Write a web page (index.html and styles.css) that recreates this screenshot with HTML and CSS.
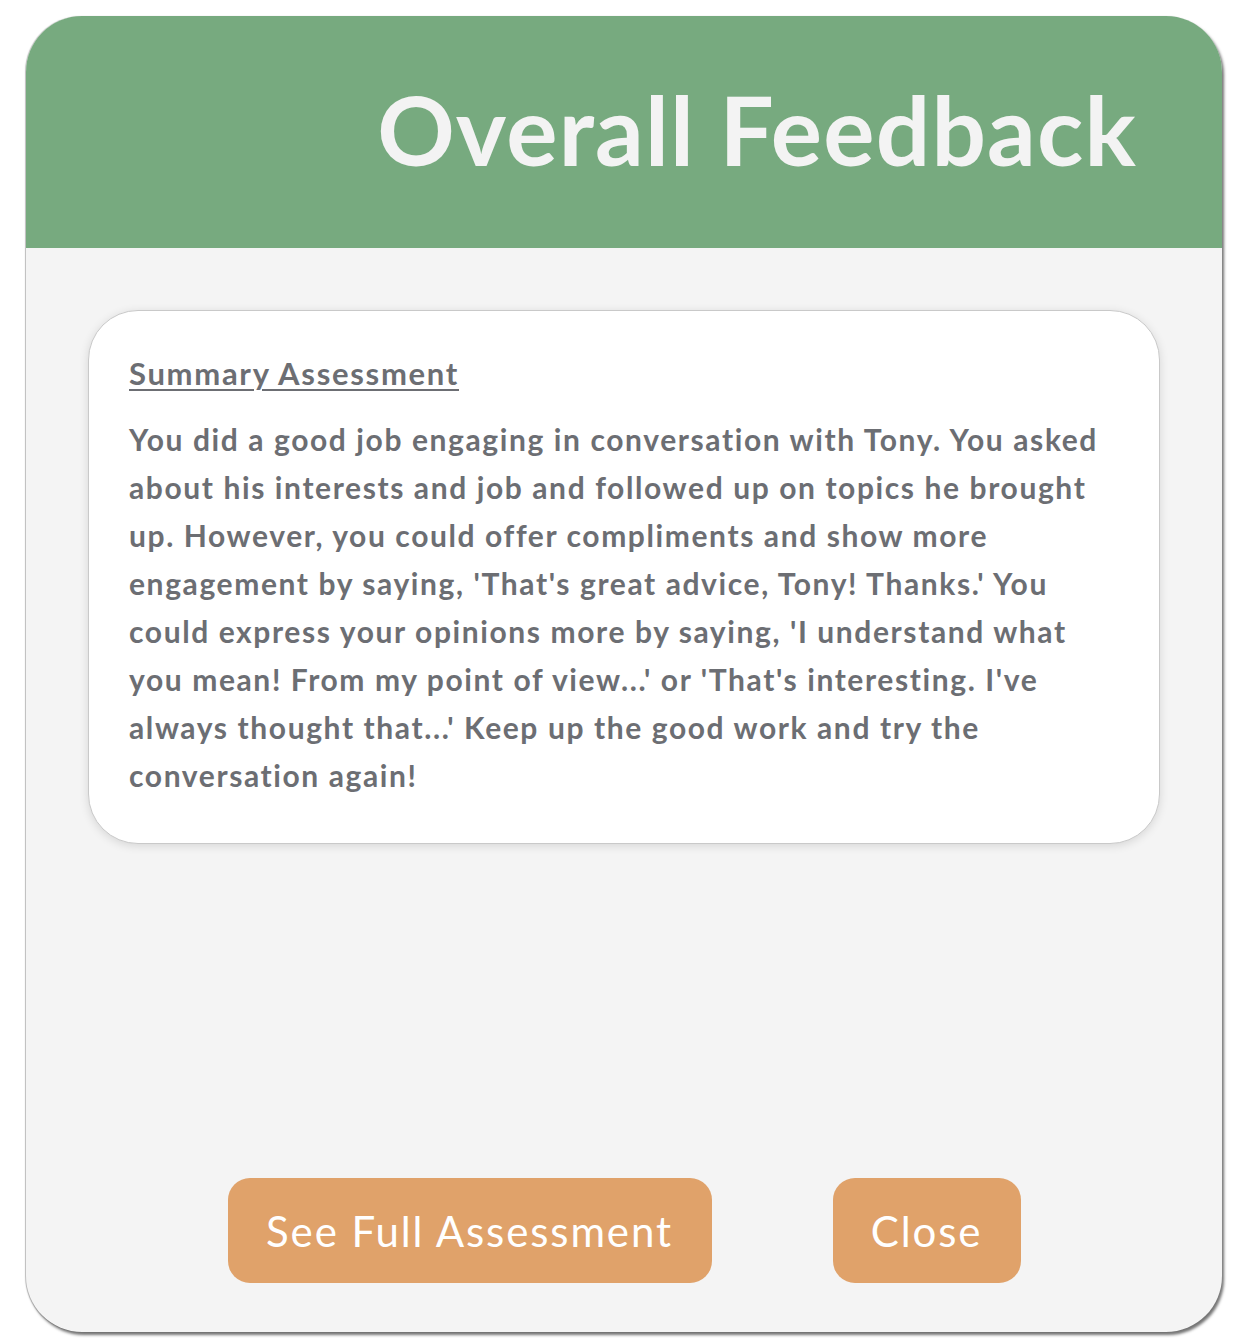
FILE: index.html
```html
<!DOCTYPE html>
<html>
<head>
<meta charset="utf-8">
<link rel="stylesheet" href="styles.css">
</head>
<body>
<div class="modal">
  <div class="header">
    <h1 class="title">Overall Feedback</h1>
  </div>
  <div class="content">
    <div class="summary">
      <h2 class="summary-title">Summary Assessment</h2>
      <p class="summary-text">You did a good job engaging in conversation with Tony. You asked about his interests and job and followed up on topics he brought up. However, you could offer compliments and show more engagement by saying, 'That's great advice, Tony! Thanks.' You could express your opinions more by saying, 'I understand what you mean! From my point of view...' or 'That's interesting. I've always thought that...' Keep up the good work and try the conversation again!</p>
    </div>
    <div class="actions">
      <button class="btn btn-wide">See Full Assessment</button>
      <button class="btn btn-close">Close</button>
    </div>
  </div>
</div>
</body>
</html>
```
FILE: styles.css
```css
html, body {
  margin: 0;
  padding: 0;
  background: #ffffff;
}
body {
  padding: 16px 29px 12px 26px;
  font-family: "Lato", "Open Sans", sans-serif;
}
.modal {
  width: 1196px;
  height: 1316px;
  background: #f4f4f4;
  border-radius: 56px;
  box-shadow: 2px 3px 3px rgba(0, 0, 0, 0.55), -1px 0 1px rgba(0, 0, 0, 0.25);
  overflow: hidden;
  display: flex;
  flex-direction: column;
}
.header {
  height: 232px;
  background: #77aa7f;
  display: flex;
  align-items: center;
  justify-content: flex-end;
  padding-right: 85px;
  flex-shrink: 0;
}
.title {
  margin: 0;
  color: #f3f3f3;
  font-size: 96px;
  font-weight: 700;
  line-height: 1;
  letter-spacing: 1.2px;
  padding-top: 0;
  padding-bottom: 6px;
}
.content {
  flex: 1;
  display: flex;
  flex-direction: column;
  padding: 62px 62px 49px 62px;
}
.summary {
  background: #ffffff;
  border: 1px solid #c9c9c9;
  border-radius: 50px;
  box-shadow: 0 2px 10px rgba(0, 0, 0, 0.12);
  padding: 40px 40px 44px 40px;
  color: #6c6e73;
}
.summary-title {
  margin: 0;
  font-size: 31px;
  font-weight: 700;
  letter-spacing: 1.7px;
  text-decoration: underline;
  text-underline-offset: 4px;
  text-decoration-thickness: 2px;
  line-height: 44px;
}
.summary-text {
  margin: 20px 0 0 0;
  font-size: 30px;
  font-weight: 700;
  letter-spacing: 1.6px;
  line-height: 48px;
}
.actions {
  margin-top: auto;
  display: flex;
  justify-content: center;
  gap: 121px;
}
.btn {
  height: 105px;
  border: none;
  border-radius: 22px;
  background: #e0a26a;
  color: #ffffff;
  font-family: "Lato", "Open Sans", sans-serif;
  font-size: 42px;
  font-weight: 400;
  letter-spacing: 1.9px;
  padding: 0;
  cursor: pointer;
}
.btn-wide {
  width: 484px;
}
.btn-close {
  width: 188px;
}
```
